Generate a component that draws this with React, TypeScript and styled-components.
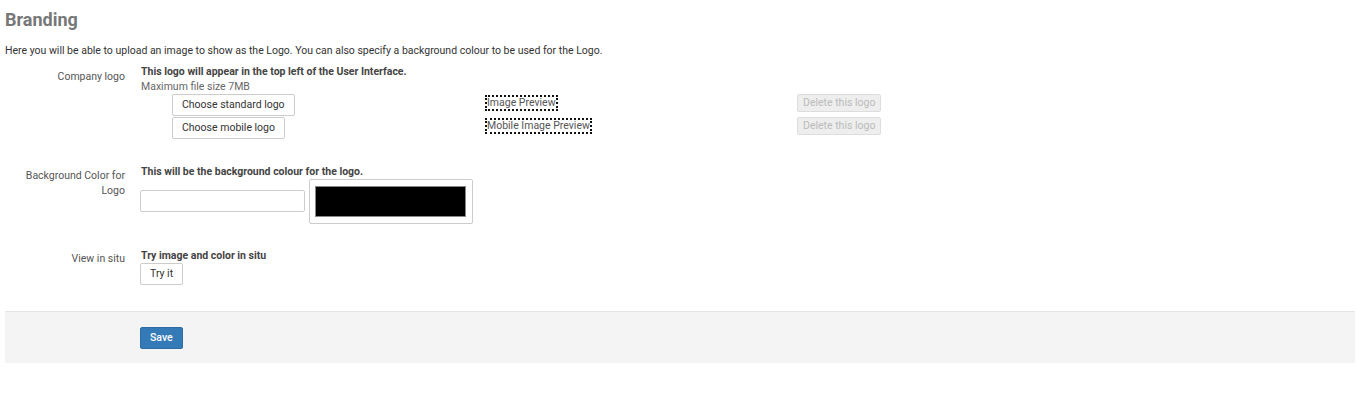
import React from "react";
import styled, { createGlobalStyle } from "styled-components";

const Global = createGlobalStyle`
  html, body { margin: 0; padding: 0; background: #fff; }
  body { font-family: Roboto, "Liberation Sans", Arial, sans-serif; color: #333; }
  * { box-sizing: border-box; }
`;

const Page = styled.div`
  padding: 0 2px 0 5px;
`;

const Title = styled.h1`
  margin: 0;
  padding-top: 9px;
  font-size: 18px;
  line-height: 22px;
  font-weight: 700;
  color: #777;
`;

const Intro = styled.p`
  margin: 13px 0 0 0;
  font-size: 10.5px;
  line-height: 14px;
  color: #333;
`;

const Row = styled.div<{ $mt: number }>`
  display: grid;
  grid-template-columns: 120px 1fr;
  column-gap: 15px;
  margin-top: ${(p) => p.$mt}px;
`;

const Label = styled.div<{ $pt: number }>`
  text-align: right;
  font-size: 10.5px;
  line-height: 15px;
  color: #555;
  padding-top: ${(p) => p.$pt}px;
`;

const Content = styled.div`
  display: flex;
  flex-direction: column;
  align-items: flex-start;
`;

const Lead = styled.div`
  font-size: 10.5px;
  line-height: 15px;
  font-weight: 700;
  color: #444;
  padding-left: 1px;
`;

const Hint = styled.div`
  font-size: 10.5px;
  line-height: 15px;
  color: #666;
  padding-left: 1px;
`;

const UploadGrid = styled.div`
  display: grid;
  grid-template-columns: 313px 312px auto;
  row-gap: 1px;
  margin-left: 32px;
  align-items: start;
`;

const Button = styled.button`
  font-family: inherit;
  font-size: 10.5px;
  line-height: 14px;
  color: #333;
  background: #fff;
  border: 1px solid #ccc;
  border-radius: 2px;
  padding: 3px 9px;
  height: 22px;
  cursor: pointer;
  justify-self: start;
`;

const DisabledButton = styled(Button)`
  background: #eee;
  color: #bbb;
  border-color: #ddd;
  height: 18px;
  padding: 1px 5px;
  cursor: default;
`;

const Preview = styled.span`
  justify-self: start;
  font-size: 10.5px;
  line-height: 12px;
  color: #555;
  border: 2px dotted #111;
  padding: 0;
  margin-top: 1px;
`;

const ColorLine = styled.div`
  display: flex;
  align-items: flex-start;
  gap: 4px;
`;

const TextInput = styled.input`
  width: 165px;
  height: 22px;
  margin-top: 11px;
  border: 1px solid #ccc;
  border-radius: 2px;
  font-family: inherit;
  font-size: 10.5px;
  padding: 2px 5px;
`;

const Swatch = styled.div`
  width: 164px;
  height: 45px;
  border: 1px solid #ccc;
  border-radius: 2px;
  padding: 6px 6px 6px 5px;
  display: flex;
`;

const SwatchFill = styled.div<{ $color: string }>`
  flex: 1;
  background: ${(p) => p.$color};
  border: 1px solid #888;
`;

const Footer = styled.div`
  margin-top: 26px;
  background: #f4f4f4;
  border-top: 1px solid #e5e5e5;
  height: 52px;
  padding: 14px 0 0 135px;
`;

const PrimaryButton = styled.button`
  font-family: inherit;
  font-size: 10.5px;
  font-weight: 500;
  color: #fff;
  background: #337ab7;
  border: 1px solid #2e6da4;
  border-radius: 2px;
  height: 22px;
  padding: 0 9px;
`;

export default function App() {
  return (
    <Page>
      <Global />
      <Title>Branding</Title>
      <Intro>
        Here you will be able to upload an image to show as the Logo. You can also specify a
        background colour to be used for the Logo.
      </Intro>

      <Row $mt={6}>
        <Label $pt={5}>Company logo</Label>
        <Content>
          <Lead>This logo will appear in the top left of the User Interface.</Lead>
          <Hint>Maximum file size 7MB</Hint>
          <UploadGrid>
            <Button>Choose standard logo</Button>
            <Preview>Image Preview</Preview>
            <DisabledButton disabled>Delete this logo</DisabledButton>
            <Button>Choose mobile logo</Button>
            <Preview>Mobile Image Preview</Preview>
            <DisabledButton disabled>Delete this logo</DisabledButton>
          </UploadGrid>
        </Content>
      </Row>

      <Row $mt={25}>
        <Label $pt={4}>
          Background Color for
          <br />
          Logo
        </Label>
        <Content>
          <Lead>This will be the background colour for the logo.</Lead>
          <ColorLine>
            <TextInput type="text" defaultValue="" />
            <Swatch>
              <SwatchFill $color="#000" />
            </Swatch>
          </ColorLine>
        </Content>
      </Row>

      <Row $mt={24}>
        <Label $pt={3}>View in situ</Label>
        <Content>
          <Lead>Try image and color in situ</Lead>
          <Button>Try it</Button>
        </Content>
      </Row>

      <Footer>
        <PrimaryButton>Save</PrimaryButton>
      </Footer>
    </Page>
  );
}
